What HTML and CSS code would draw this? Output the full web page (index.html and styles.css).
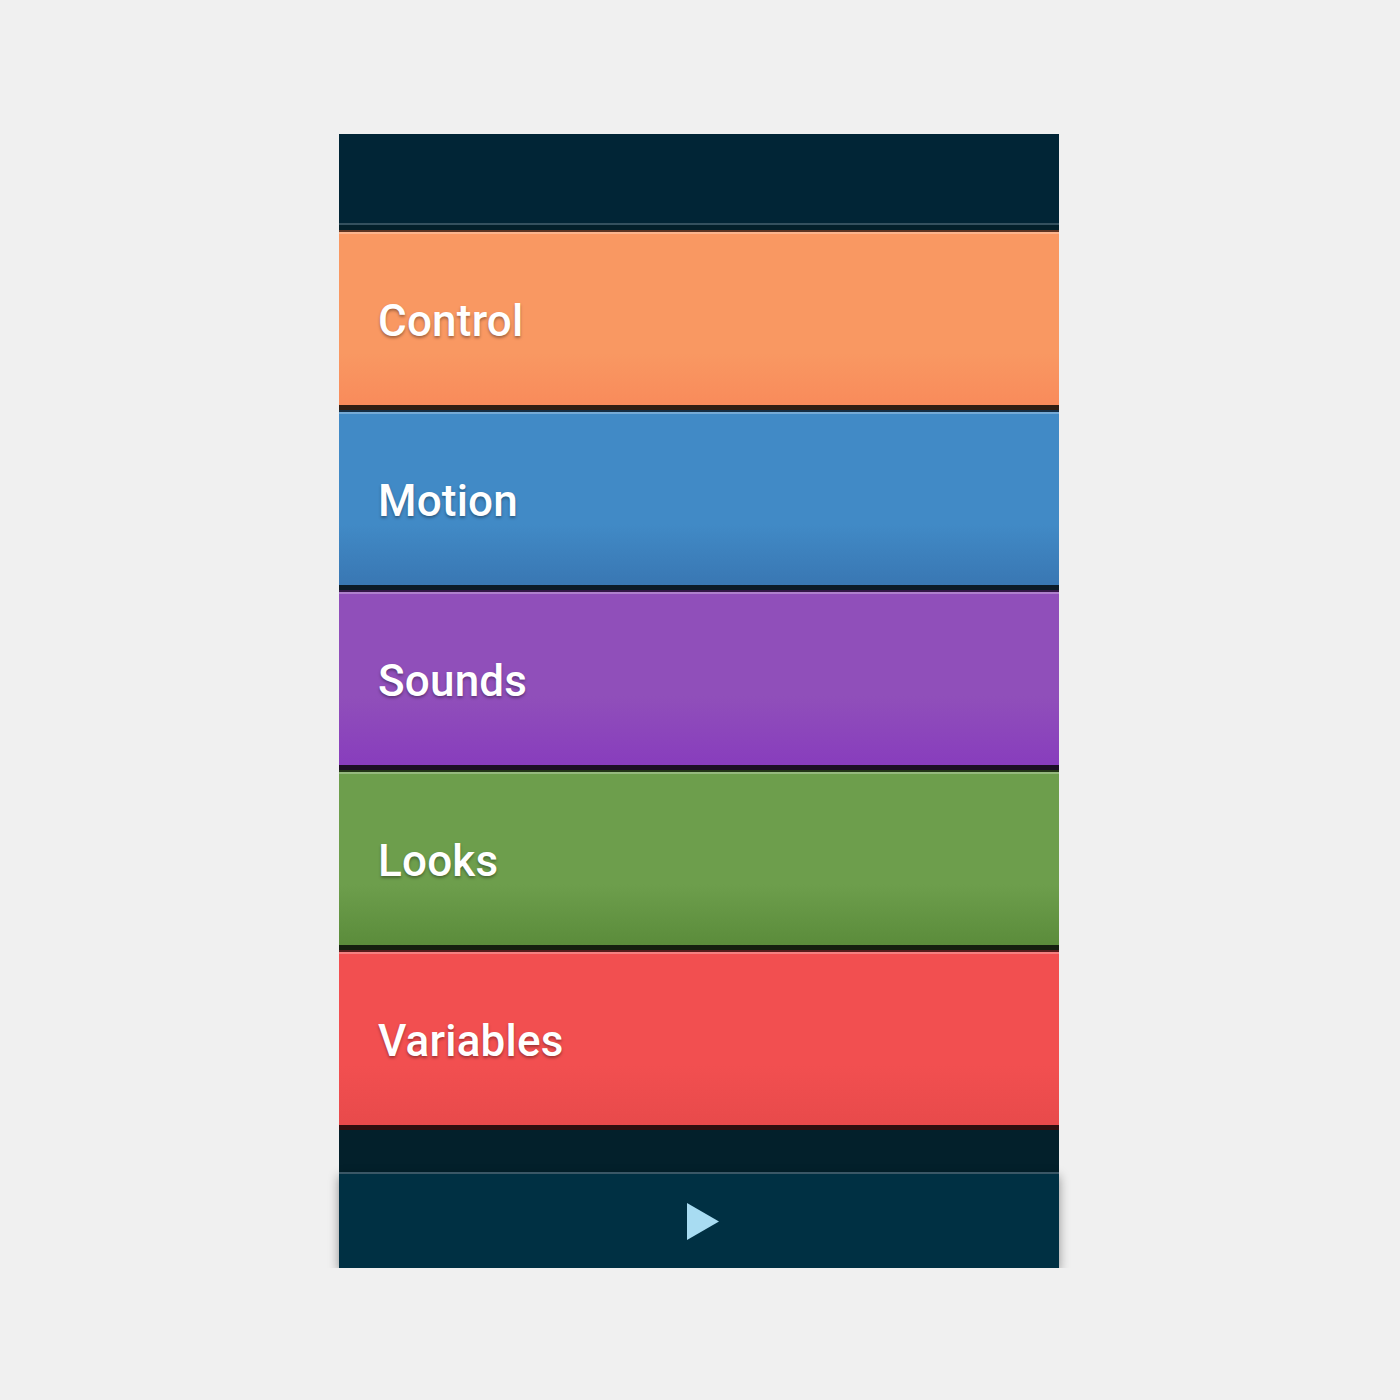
FILE: index.html
```html
<!DOCTYPE html>
<html>
<head>
<meta charset="utf-8">
<link rel="stylesheet" href="styles.css">
</head>
<body>
<div class="app">
  <header class="topbar"></header>
  <ul class="list">
    <li class="item control">Control</li>
    <li class="item motion">Motion</li>
    <li class="item sounds">Sounds</li>
    <li class="item looks">Looks</li>
    <li class="item variables">Variables</li>
  </ul>
  <footer class="footer">
    <svg class="play" width="32" height="37" viewBox="0 0 32 37"><polygon points="0,0 32,18.5 0,37" fill="#a8dcf2"/></svg>
  </footer>
</div>
</body>
</html>
```
FILE: styles.css
```css
html, body {
  margin: 0;
  padding: 0;
  background: #f0f0f0;
}
.app {
  width: 720px;
  margin: 134px 0 0 339px;
  display: flex;
  flex-direction: column;
}
.topbar {
  height: 89px;
  background: #012536;
  border-bottom: 2px solid #34515f;
}
.list {
  list-style: none;
  margin: 0;
  padding: 5px 0 42px;
  background: #03202b;
}
.item {
  box-sizing: border-box;
  height: 180px;
  border-top: 2px solid rgba(0, 0, 0, 0.62);
  border-bottom: 5px solid rgba(0, 0, 0, 0.8);
  box-shadow: inset 0 2px 0 rgba(255, 255, 255, 0.28);
  display: flex;
  align-items: center;
  padding: 4px 0 0 39px;
  font-family: Roboto, "Liberation Sans", sans-serif;
  font-weight: 500;
  font-size: 44px;
  letter-spacing: 0.2px;
  color: #fff;
  text-shadow: 0 2px 3px rgba(0, 0, 0, 0.35);
}
.control { background: linear-gradient(#f99862 0%, #f99862 70%, #f98b5b 100%); }
.motion { background: linear-gradient(#418ac6 0%, #418ac6 65%, #3977b3 100%); }
.sounds { background: linear-gradient(#904fba 0%, #904fba 60%, #883dbd 100%); }
.looks { background: linear-gradient(#6d9e4c 0%, #6d9e4c 65%, #5b8c3b 100%); }
.variables { background: linear-gradient(#f24f50 0%, #f24f50 65%, #e84a4b 100%); }
.footer {
  height: 94px;
  background: #003043;
  border-top: 2px solid #3a5766;
  box-shadow: 0 4px 10px rgba(0, 0, 0, 0.4);
  display: flex;
  align-items: center;
  justify-content: center;
}
.play {
  display: block;
  margin-left: 8px;
}
```
